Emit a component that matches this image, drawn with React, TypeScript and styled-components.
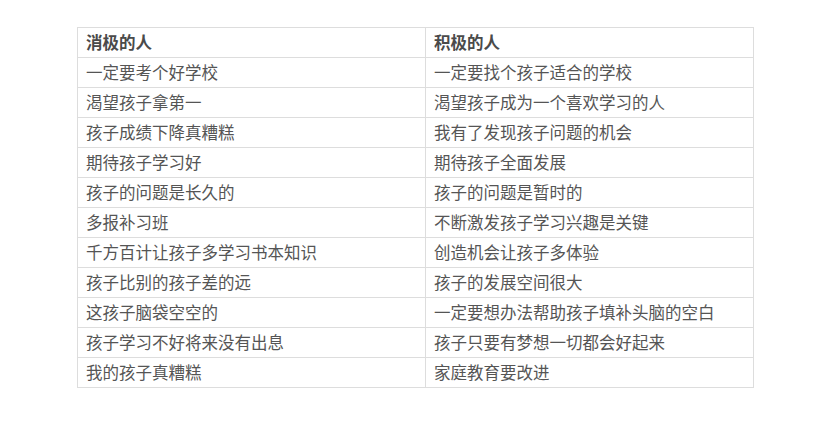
import React from 'react';
import styled, { createGlobalStyle } from 'styled-components';

const GlobalStyle = createGlobalStyle`
    html, body {
        margin: 0;
        padding: 0;
        background: #fff;
    }
    body {
        font-family: "Noto Sans CJK SC", "Microsoft YaHei", sans-serif;
    }
`
const Page = styled.div`
    width: 825px;
    height: 439px;
    padding: 27px 0 0 77px;
    box-sizing: border-box;
`
const Table = styled.table`
    border-collapse: collapse;
    width: 676px;
    table-layout: fixed;
    border: 1px solid #ddd;
`
const Col = styled.col<{ $w: number }>`
    width: ${p => p.$w}px;
`
const Cell = styled.td`
    height: 29px;
    padding: 0 8px;
    border: 1px solid #ddd;
    font-size: 16.5px;
    line-height: 29px;
    color: #555;
    font-weight: 400;
    text-align: left;
    white-space: nowrap;
    box-sizing: border-box;
`
const HeadCell = styled(Cell).attrs({ as: 'th' })`
    color: #4a4a4a;
    font-weight: 700;
`
const head = ['消极的人', '积极的人'];
const rows = [
    ['一定要考个好学校', '一定要找个孩子适合的学校'],
    ['渴望孩子拿第一', '渴望孩子成为一个喜欢学习的人'],
    ['孩子成绩下降真糟糕', '我有了发现孩子问题的机会'],
    ['期待孩子学习好', '期待孩子全面发展'],
    ['孩子的问题是长久的', '孩子的问题是暂时的'],
    ['多报补习班', '不断激发孩子学习兴趣是关键'],
    ['千方百计让孩子多学习书本知识', '创造机会让孩子多体验'],
    ['孩子比别的孩子差的远', '孩子的发展空间很大'],
    ['这孩子脑袋空空的', '一定要想办法帮助孩子填补头脑的空白'],
    ['孩子学习不好将来没有出息', '孩子只要有梦想一切都会好起来'],
    ['我的孩子真糟糕', '家庭教育要改进'],
];

const App = () => {
    return (
        <>
            <GlobalStyle />
            <Page>
                <Table>
                    <colgroup>
                        <Col $w={348} />
                        <Col $w={328} />
                    </colgroup>
                    <thead>
                        <tr>
                            {head.map(h => <HeadCell key={h}>{h}</HeadCell>)}
                        </tr>
                    </thead>
                    <tbody>
                        {rows.map((r, i) => (
                            <tr key={i}>
                                <Cell>{r[0]}</Cell>
                                <Cell>{r[1]}</Cell>
                            </tr>
                        ))}
                    </tbody>
                </Table>
            </Page>
        </>
    );
};

export default App;
